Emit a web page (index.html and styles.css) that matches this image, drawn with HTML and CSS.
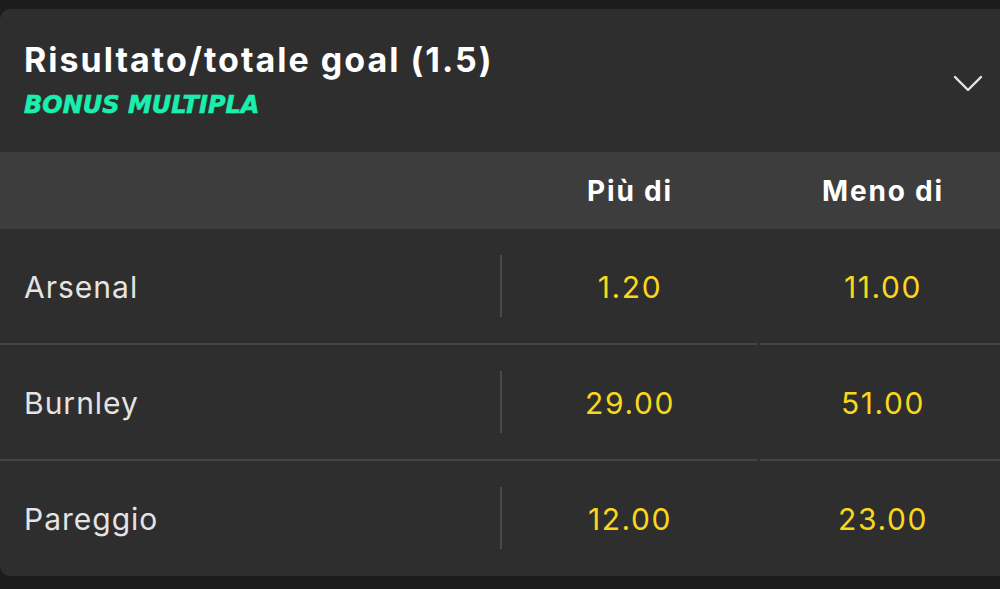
FILE: index.html
```html
<!DOCTYPE html>
<html lang="it">
  <head>
    <meta charset="UTF-8">
    <title>Risultato/totale goal</title>
    <link rel="stylesheet" href="styles.css">
  </head>
  <body>
    <section class="market">
      <header class="market-head">
        <div class="market-titles">
          <h2 class="market-title">Risultato/totale goal (1.5)</h2>
          <span class="market-badge">BONUS MULTIPLA</span>
        </div>
        <svg class="chevron" width="30" height="18" viewBox="0 0 30 18">
          <path d="M2 2 L15 15 L28 2" fill="none" stroke="#e6e6e6" stroke-width="2.4" stroke-linecap="round" stroke-linejoin="round"/>
        </svg>
      </header>

      <div class="cols">
        <span></span>
        <span class="col-label">Più di</span>
        <span class="col-label">Meno di</span>
      </div>

      <div class="row">
        <span class="name">Arsenal</span>
        <span class="odd">1.20</span>
        <span class="odd">11.00</span>
      </div>
      <div class="row">
        <span class="name">Burnley</span>
        <span class="odd">29.00</span>
        <span class="odd">51.00</span>
      </div>
      <div class="row">
        <span class="name">Pareggio</span>
        <span class="odd">12.00</span>
        <span class="odd">23.00</span>
      </div>
    </section>
  </body>
</html>
```

FILE: styles.css
```css
html {
  box-sizing: border-box;
  font-family: Inter, "Liberation Sans", Arial, sans-serif;
}

*,
*:before,
*:after {
  box-sizing: inherit;
}

body {
  background: #1c1c1c;
  margin: 0;
  min-height: 100vh;
  overflow: hidden;
  padding-top: 9px;
}

.market {
  background: #2e2e2e;
  border-radius: 10px;
  overflow: hidden;
  width: 1012px;
}

.market-head {
  align-items: center;
  display: flex;
  height: 143px;
  justify-content: space-between;
  padding: 0 29px 0 24px;
}

.market-titles {
  display: flex;
  flex-direction: column;
  margin-top: -2px;
}

.market-title {
  color: #fff;
  font-size: 34px;
  font-weight: 700;
  letter-spacing: 2px;
  line-height: 40px;
  margin: 0;
}

.market-badge {
  color: #19f0ae;
  font-family: "DejaVu Sans", sans-serif;
  font-size: 24px;
  font-style: italic;
  font-weight: bold;
  line-height: 28px;
  margin-top: 11px;
  -webkit-text-stroke: 0.6px #19f0ae;
}

.chevron {
  margin-top: 6px;
}

.cols,
.row {
  display: grid;
  grid-template-columns: 502px 256px 1fr;
}

.cols {
  align-items: center;
  background: #3d3d3d;
  height: 77px;
}

.col-label {
  color: #fff;
  font-size: 28px;
  font-weight: 700;
  letter-spacing: 1.8px;
  text-align: center;
}

.cols .col-label:last-child {
  padding-right: 4px;
}

.row {
  align-items: center;
  background:
    linear-gradient(#444, #444) 0 100% / 757px 2px no-repeat,
    linear-gradient(#444, #444) 760px 100% / 100% 2px no-repeat;
  height: 116px;
}

.row:last-child {
  background: none;
  height: 115px;
}

.name {
  align-self: stretch;
  align-items: center;
  color: #e4e4e4;
  display: flex;
  font-size: 30px;
  letter-spacing: 1px;
  padding-left: 24px;
  position: relative;
}

.name:after {
  background: #4a4a4a;
  content: "";
  height: 62px;
  position: absolute;
  right: 0;
  top: 26px;
  width: 2px;
}

.odd {
  color: #f9d71c;
  font-size: 30px;
  letter-spacing: 1.6px;
  text-align: center;
}

.odd:last-child {
  padding-right: 4px;
}
```
